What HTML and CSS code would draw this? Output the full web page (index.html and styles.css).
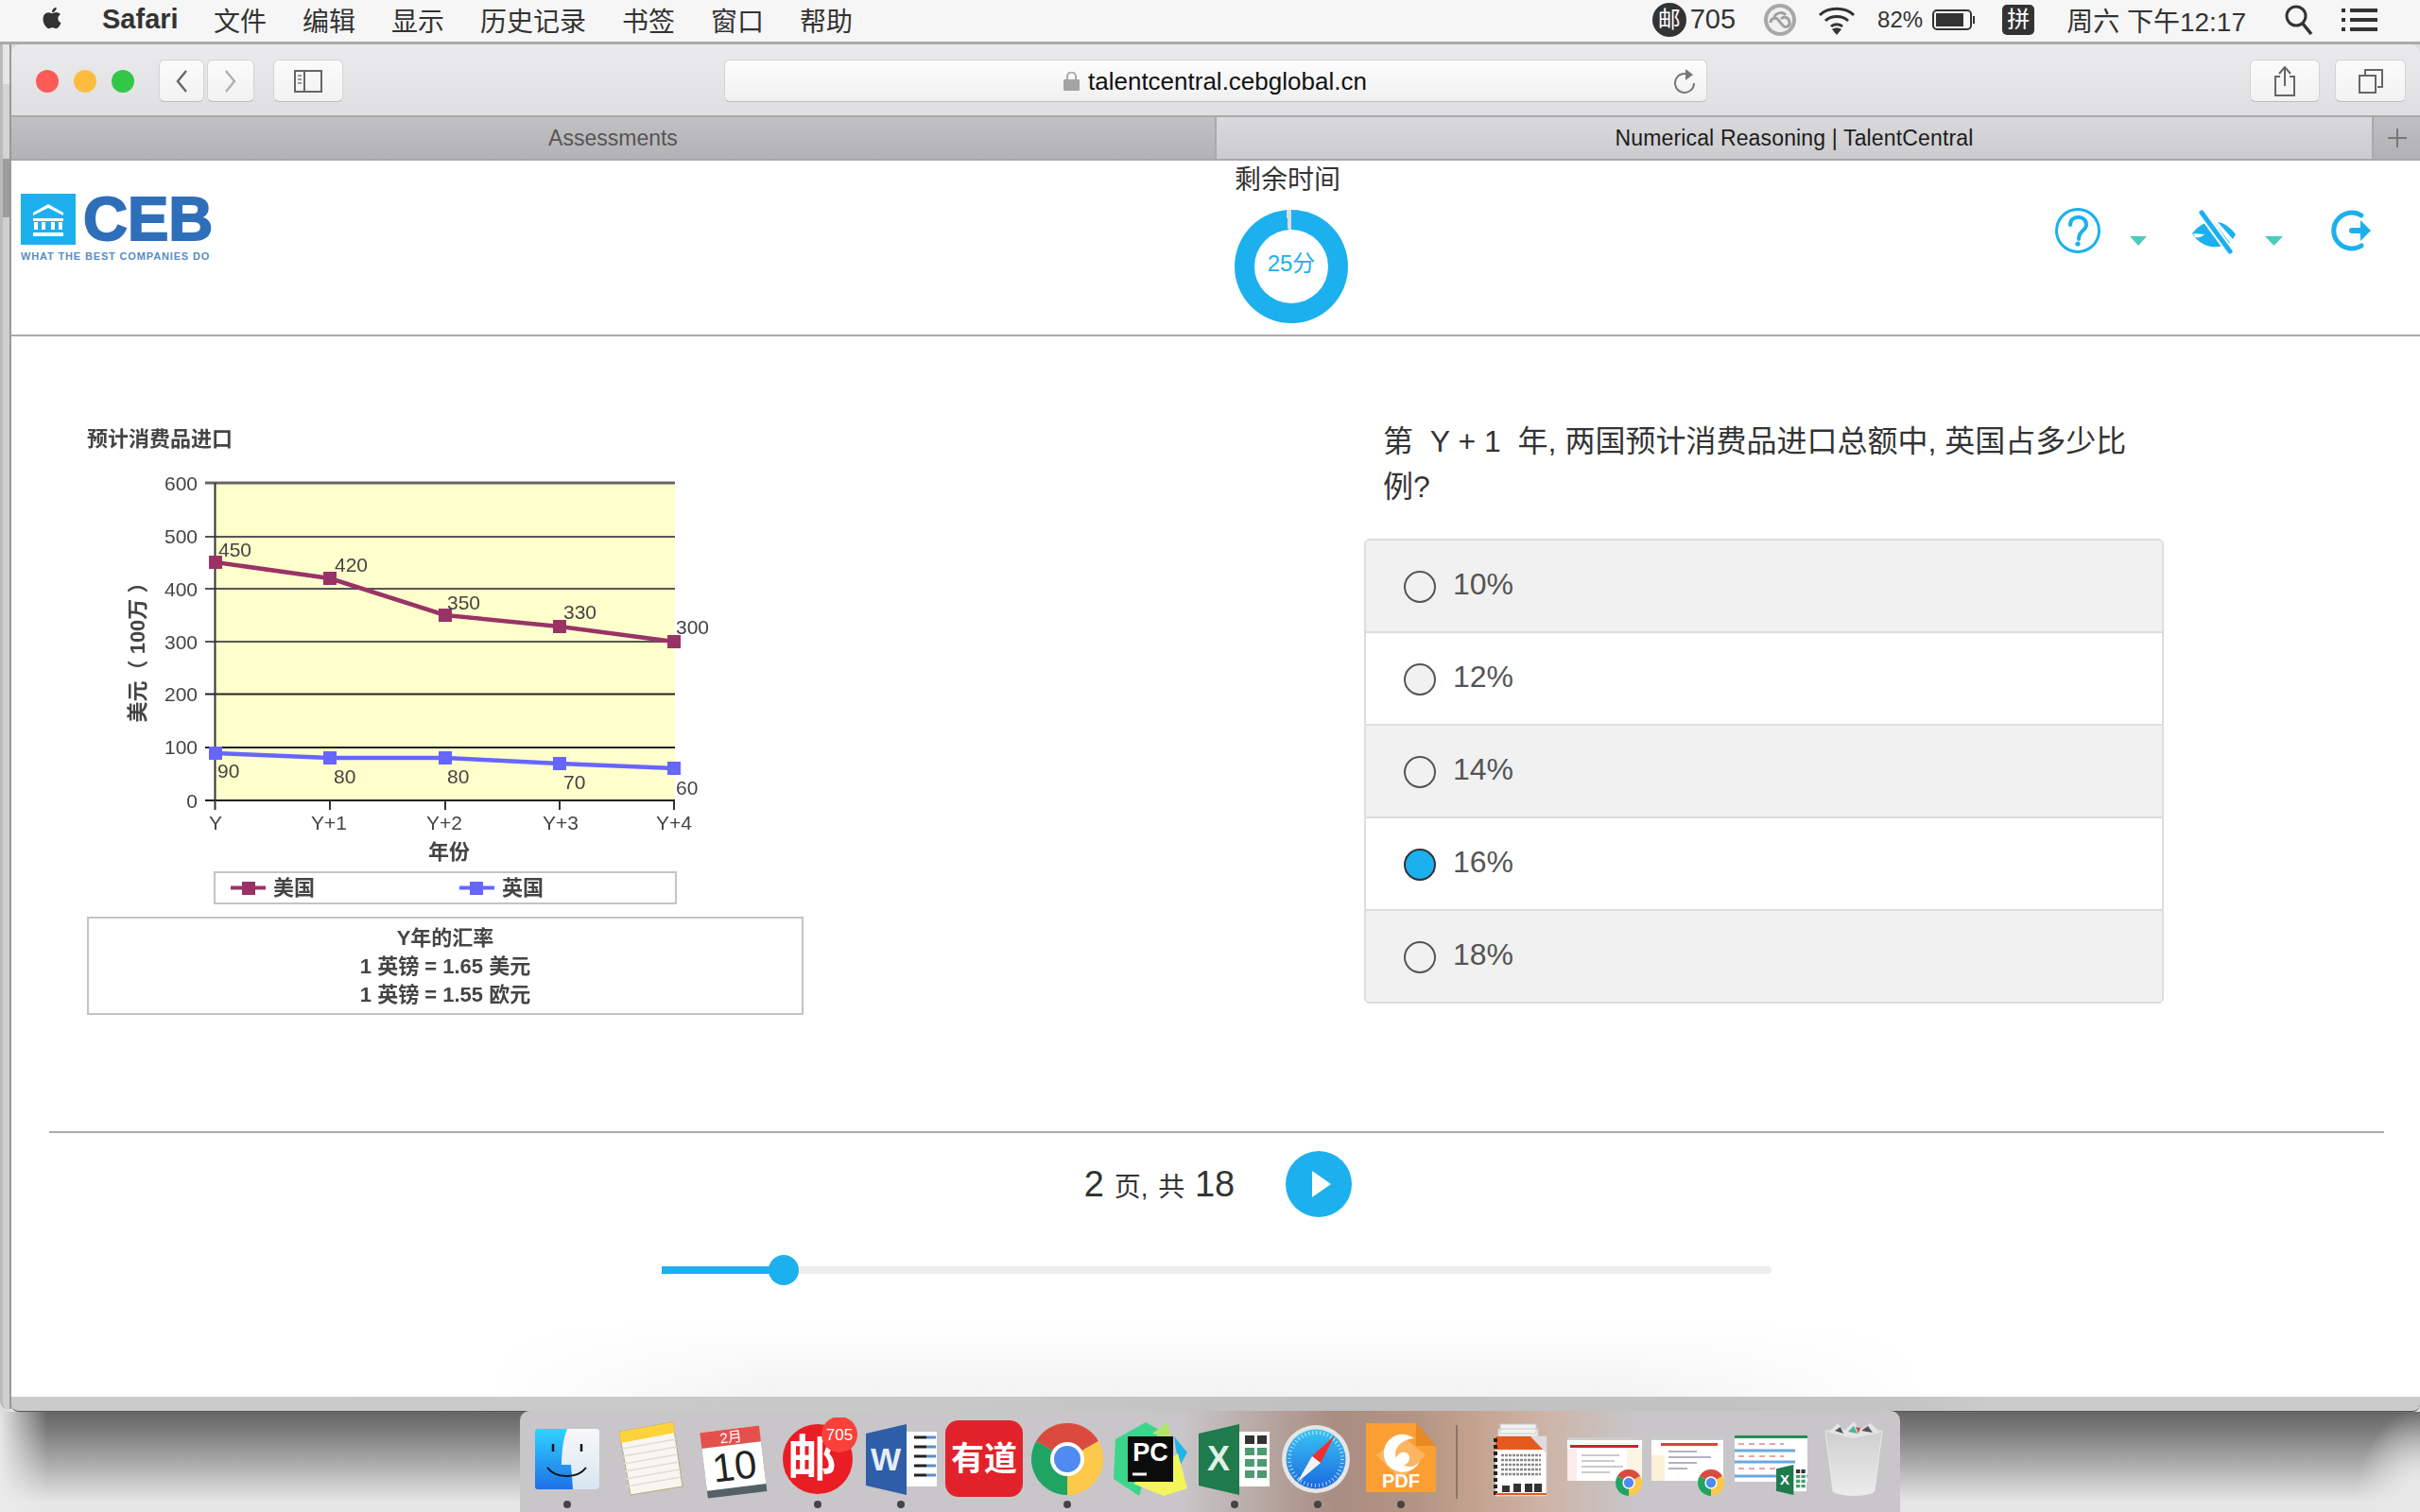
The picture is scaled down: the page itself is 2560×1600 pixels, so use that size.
FILE: index.html
```html
<!DOCTYPE html>
<html>
<head>
<title>Numerical Reasoning | TalentCentral</title>
<meta charset="utf-8">
<link rel="stylesheet" href="styles.css">
</head>
<body>

<svg class="defs" width="0" height="0">
 <symbol id="chrome" viewBox="0 0 76 76">
  <path d="M38 38L5.100 19A38 38 0 0 1 71 19Z" fill="#db4a3f"/>
  <path d="M38 38L71 19A38 38 0 0 1 38 76Z" fill="#fdc94b"/>
  <path d="M38 38L38 76A38 38 0 0 1 5.100 19Z" fill="#1fa463"/>
  <circle cx="38" cy="38" r="18" fill="#fff"/>
  <circle cx="38" cy="38" r="14" fill="#4f8bf0"/>
 </symbol>
 <symbol id="excel" viewBox="0 0 75 75">
  <rect x="42" y="8" width="33" height="58" fill="#fff"/>
  <path d="M49 12h10v9H49zM62 12h10v9H62z" fill="#333"/>
  <path d="M49 25h10v8H49zM62 25h10v8H62zM49 37h10v8H49zM62 37h10v8H62zM49 49h10v8H49zM62 49h10v8H62z" fill="#4d9a70"/>
  <path d="M0 10L43 0V75L0 65Z" fill="#1f7a4c"/>
 </symbol>
</svg>

<div class="menubar">
 <svg class="apple" viewBox="0 0 24 24"><path d="M17.05 20.28c-.98.95-2.05.8-3.08.35-1.09-.46-2.09-.48-3.24 0-1.44.62-2.2.44-3.06-.35C2.79 15.25 3.51 7.59 9.05 7.31c1.35.07 2.29.74 3.08.8 1.18-.24 2.31-.93 3.57-.84 1.51.12 2.65.72 3.4 1.8-3.12 1.87-2.38 5.98.48 7.13-.57 1.5-1.31 2.99-2.54 4.09zM12.03 7.25c-.15-2.23 1.66-4.07 3.74-4.25.29 2.58-2.34 4.5-3.74 4.25z"/></svg>
 <b class="appname">Safari</b>
 <span>文件</span><span>编辑</span><span>显示</span><span>历史记录</span><span>书签</span><span>窗口</span><span>帮助</span>
 <div class="status">
  <span class="mailbadge">邮</span>
  <span class="count">705</span>
  <svg class="st-cc" width="38" height="38" viewBox="0 0 38 38"><circle cx="19" cy="19" r="17" fill="#a8a8a8"/><circle cx="19" cy="19" r="13" fill="#f0f0f0"/><path d="M9 22c0-5 6-6 8-3l5 6c3 3 8 1 7-4s-6-6-9-3M13 16c2-5 9-6 12-2" fill="none" stroke="#a0a0a0" stroke-width="3"/></svg>
  <svg class="st-wifi" width="42" height="32" viewBox="0 0 42 32"><path d="M3 11C12 2 30 2 39 11M9 17C15 11 27 11 33 17M15 23C18 20 24 20 27 23" fill="none" stroke="#333" stroke-width="3"/><path d="M21 32l-5-6c3-2 7-2 10 0z" fill="#333"/></svg>
  <span class="pct">82%</span>
  <svg class="st-batt" width="46" height="22" viewBox="0 0 46 22"><rect x="1" y="1" width="40" height="20" rx="4" fill="none" stroke="#333" stroke-width="2"/><rect x="4" y="4" width="29" height="14" fill="#333"/><path d="M43 7h2v8h-2z" fill="#333"/></svg>
  <span class="pinyin">拼</span>
  <span class="clock">周六 下午12:17</span>
  <svg class="st-search" width="30" height="32" viewBox="0 0 30 32"><circle cx="12" cy="12" r="10" fill="none" stroke="#333" stroke-width="3"/><path d="M19 20l9 11" stroke="#333" stroke-width="3.500"/></svg>
  <svg class="st-list" width="38" height="24" viewBox="0 0 38 24"><path d="M9 2h29M9 12h29M9 22h29" stroke="#333" stroke-width="4"/><path d="M0 2h4M0 12h4M0 22h4" stroke="#333" stroke-width="4"/></svg>
 </div>
</div>

<div class="desk">
 <div class="backwin"></div>
 <div class="window">
  <div class="toolbar">
   <i class="light red"></i><i class="light yellow"></i><i class="light green"></i>
   <div class="btn btn-back"><svg width="14" height="26" viewBox="0 0 14 26"><path d="M12 2L3 13l9 11" fill="none" stroke="#666" stroke-width="2.400"/></svg></div>
   <div class="btn btn-fwd"><svg width="14" height="26" viewBox="0 0 14 26"><path d="M2 2l9 11-9 11" fill="none" stroke="#b0b0b0" stroke-width="2.400"/></svg></div>
   <div class="btn btn-side"><svg width="30" height="24" viewBox="0 0 30 24"><rect x="1" y="1" width="28" height="22" fill="none" stroke="#666" stroke-width="2"/><path d="M11 1v22" stroke="#666" stroke-width="2"/><path d="M4 6h4M4 10h4M4 14h4" stroke="#999" stroke-width="2"/></svg></div>
   <div class="urlbar">
    <svg class="lock" width="17" height="20" viewBox="0 0 17 20"><path d="M4 9V5a4.500 4.500 0 0 1 9 0v4" fill="none" stroke="#aaa" stroke-width="2"/><rect y="8" width="17" height="12" rx="1" fill="#a3a3a3"/></svg>
    <span class="url">talentcentral.cebglobal.cn</span>
    <svg class="reload" width="26" height="28" viewBox="0 0 26 28"><path d="M19 8A10 10 0 1 0 23 16" fill="none" stroke="#777" stroke-width="2"/><path d="M14 1l8 6-8 6z" fill="#777"/></svg>
   </div>
   <div class="btn btn-share"><svg width="24" height="32" viewBox="0 0 24 32"><path d="M7 11H2v20h20V11h-5" fill="none" stroke="#666" stroke-width="2"/><path d="M12 21V2M6 8l6-7 6 7" fill="none" stroke="#666" stroke-width="2"/></svg></div>
   <div class="btn btn-tabs"><svg width="26" height="26" viewBox="0 0 26 26"><rect x="1" y="7" width="17" height="18" fill="none" stroke="#666" stroke-width="2"/><path d="M7 6V1h18v18h-5" fill="none" stroke="#666" stroke-width="2"/></svg></div>
  </div>

  <div class="tabs">
   <div class="tab tab-off">Assessments</div>
   <div class="tab tab-on">Numerical Reasoning | TalentCentral</div>
   <div class="tab-add"><svg width="24" height="24" viewBox="0 0 24 24"><path d="M12 2v20M2 12h20" stroke="#777" stroke-width="2"/></svg></div>
  </div>

  <div class="page">
   <header class="head">
    <div class="logo">
     <div class="logo-row">
      <svg width="58" height="54" viewBox="0 0 58 54"><rect width="58" height="54" fill="#1cb0ee"/><path d="M13 20L29 11l16 9v3L29 15 13 23z" fill="#fff"/><path d="M13 26h32v3H13zM13 41h32v4H13zM14 30h4v8h-4zM22 30h4v8h-4zM32 30h4v8h-4zM40 30h4v8h-4z" fill="#fff"/></svg>
      <span class="logo-name">CEB</span>
     </div>
     <div class="logo-tag">WHAT THE BEST COMPANIES DO</div>
    </div>
    <div class="timer">
     <div class="timer-label">剩余时间</div>
     <div class="donut"><span>25分</span></div>
    </div>
    <div class="head-icons">
     <svg width="352" height="60" viewBox="2170 220 352 60">
      <circle cx="2198" cy="244" r="22.500" fill="none" stroke="#1cb0ee" stroke-width="3"/>
      <path d="M2190 238c0-11 17-11 17 0 0 6-8 6-8 15" fill="none" stroke="#1cb0ee" stroke-width="4" stroke-linecap="round"/>
      <circle cx="2198" cy="258" r="2.600" fill="#1cb0ee"/>
      <path d="M2253 250h18l-9 10z" fill="#4fc9bb"/>
      <path d="M2319 247c8-10 17-13 23-12l17 22c-9 5-18 5-24 3-6-2-12-6-16-13z" fill="#1cb0ee"/>
      <path d="M2346 235c7 1 13 5 19 13l-3 5z" fill="#1cb0ee"/>
      <path d="M2320 247l12 1c-3 3-7 4-10 3z" fill="#fff"/>
      <path d="M2329 225l30 41" stroke="#fff" stroke-width="9"/>
      <path d="M2329 225l30 41" stroke="#1cb0ee" stroke-width="5" stroke-linecap="round"/>
      <path d="M2396 250h19l-9.500 10z" fill="#4fc9bb"/>
      <path d="M2498 228a19 19 0 1 0 0 32" fill="none" stroke="#1cb0ee" stroke-width="5" stroke-linecap="round"/>
      <path d="M2488 244h10" stroke="#1cb0ee" stroke-width="6" stroke-linecap="round"/>
      <path d="M2497 233l11 11-11 11z" fill="#1cb0ee"/>
     </svg>
    </div>
   </header>

   <main class="main">
    <div class="chart-col">
     <svg class="chart" width="770" height="630" viewBox="90 450 770 630">
      <text x="92" y="472" class="t-bold">预计消费品进口</text>
      <rect x="228" y="511" width="486" height="336" fill="#ffffcc"/>
      <path d="M217 511H714" stroke="#666" stroke-width="3"/>
      <path d="M217 568H714M217 623H714M217 679H714" stroke="#555" stroke-width="2"/>
      <path d="M217 734.500H714M217 791H714M217 847H714" stroke="#222" stroke-width="2"/>
      <path d="M227.500 511V857M349 847v10M471 847v10M592 847v10M713 847v10" stroke="#333" stroke-width="2"/>
      <g class="t-tick" text-anchor="end">
       <text x="209" y="519">600</text><text x="209" y="575">500</text><text x="209" y="631">400</text>
       <text x="209" y="687">300</text><text x="209" y="742">200</text><text x="209" y="798">100</text><text x="209" y="855">0</text>
      </g>
      <text transform="translate(153 685) rotate(-90)" text-anchor="middle" class="t-bold">美元（ 100万 ）</text>
      <polyline points="228,595 349,612 471,651 592,663 713,679" fill="none" stroke="#993366" stroke-width="4.500"/>
      <path d="M221 588h14v14h-14zM342 605h14v14h-14zM464 644h14v14h-14zM585 656h14v14h-14zM706 672h14v14h-14z" fill="#993366"/>
      <polyline points="228,797 349,802 471,802 592,808 713,813" fill="none" stroke="#6666ff" stroke-width="4.500"/>
      <path d="M221 790h14v14h-14zM342 795h14v14h-14zM464 795h14v14h-14zM585 801h14v14h-14zM706 806h14v14h-14z" fill="#6666ff"/>
      <g class="t-tick">
       <text x="231" y="589">450</text><text x="354" y="605">420</text><text x="473" y="645">350</text><text x="596" y="655">330</text><text x="715" y="671">300</text>
       <text x="230" y="823">90</text><text x="353" y="829">80</text><text x="473" y="829">80</text><text x="596" y="835">70</text><text x="715" y="841">60</text>
      </g>
      <g class="t-tick" text-anchor="middle">
       <text x="228" y="878">Y</text><text x="348" y="878">Y+1</text><text x="470" y="878">Y+2</text><text x="593" y="878">Y+3</text><text x="713" y="878">Y+4</text>
      </g>
      <text x="475" y="909" text-anchor="middle" class="t-bold">年份</text>
      <rect x="227" y="923" width="488" height="33" fill="#fff" stroke="#c4c4c4" stroke-width="2"/>
      <path d="M244 939.500h37" stroke="#993366" stroke-width="4"/><rect x="256" y="933" width="14" height="14" fill="#993366"/>
      <text x="289" y="947" class="t-bold">美国</text>
      <path d="M486 939.500h37" stroke="#6666ff" stroke-width="4"/><rect x="497" y="933" width="14" height="14" fill="#6666ff"/>
      <text x="531" y="947" class="t-bold">英国</text>
      <rect x="93" y="971" width="756" height="102" fill="#fff" stroke="#c4c4c4" stroke-width="2"/>
      <g class="t-bold" text-anchor="middle">
       <text x="471" y="1000">Y年的汇率</text>
       <text x="471" y="1030">1 英镑 = 1.65 美元</text>
       <text x="471" y="1060">1 英镑 = 1.55 欧元</text>
      </g>
     </svg>
    </div>
    <div class="quiz">
     <p class="question">第&nbsp; Y + 1 &nbsp;年, 两国预计消费品进口总额中, 英国占多少比例?</p>
     <div class="options">
      <label class="opt"><i class="radio"></i>10%</label>
      <label class="opt"><i class="radio"></i>12%</label>
      <label class="opt"><i class="radio"></i>14%</label>
      <label class="opt"><i class="radio on"></i>16%</label>
      <label class="opt"><i class="radio"></i>18%</label>
     </div>
    </div>
   </main>

   <footer class="foot">
    <div class="pager">
     <div class="pager-text"><span class="big">2</span> 页, 共 <span class="big">18</span></div>
     <div class="next"><svg width="20" height="28" viewBox="0 0 20 28"><path d="M0 0l20 14L0 28z" fill="#fff"/></svg></div>
    </div>
    <div class="slider"><div class="slider-fill"></div><div class="slider-knob"></div></div>
   </footer>
   <div class="glow"></div>
  </div>
  <div class="winbottom"></div>
 </div>
</div>

<div class="wallpaper">
 <div class="dock">
  <div class="slot"><svg viewBox="0 0 88 88">
   <defs><linearGradient id="fa" x1="0" y1="0" x2="0" y2="1"><stop offset="0" stop-color="#2fd3ff"/><stop offset="1" stop-color="#1f6fe8"/></linearGradient><linearGradient id="fb" x1="0" y1="0" x2="0" y2="1"><stop offset="0" stop-color="#f8f8f8"/><stop offset="1" stop-color="#d8e6f2"/></linearGradient></defs>
   <rect x="10" y="12" width="68" height="64" rx="3" fill="url(#fa)"/>
   <path d="M44 12H75a3 3 0 0 1 3 3V73a3 3 0 0 1-3 3H50L48 50H38C38 36 40 22 44 12Z" fill="url(#fb)"/>
   <path d="M29 28v8M59 28v8" stroke="#111" stroke-width="2.500"/>
   <path d="M23 53c9 12 32 12 41 0" fill="none" stroke="#111" stroke-width="2"/>
  </svg><i class="dot"></i></div>

  <div class="slot"><svg viewBox="0 0 88 88">
   <path d="M11 15L68 5L78 73L23 82Z" fill="#f8f6ef" stroke="#b7a67a"/>
   <path d="M11 15L68 5L70 16L13 27Z" fill="#fdd23a"/>
   <path d="M14 33L71 23M15 41L72 31M16 49L73 39M17 57L74 47M18 65L75 55M19 73L76 63" stroke="#ddd" stroke-width="1.500"/>
  </svg><i class="dot-none"></i></div>

  <div class="slot"><svg viewBox="0 0 88 88">
   <g transform="rotate(-7 44 44)">
    <rect x="12" y="14" width="63" height="68" fill="#556067"/>
    <rect x="12" y="12" width="63" height="62" fill="#fff"/>
    <rect x="12" y="12" width="63" height="17" fill="#e4504c"/>
    <text x="44" y="26" class="ic-month">2月</text>
    <text x="44" y="66" class="ic-day">10</text>
   </g>
  </svg><i class="dot-none"></i></div>

  <div class="slot"><svg viewBox="0 0 88 88">
   <circle cx="44" cy="44" r="37" fill="#ea1c24"/>
   <text x="38" y="62" class="ic-mail">邮</text>
   <circle cx="67" cy="18" r="19" fill="#f9403a"/>
   <text x="67" y="24" class="ic-badge">705</text>
  </svg><i class="dot"></i></div>

  <div class="slot"><svg viewBox="0 0 88 88">
   <rect x="50" y="15" width="32" height="58" fill="#fff"/>
   <path d="M58 21h13M58 31h13M58 41h13M58 51h13M58 61h13" stroke="#222" stroke-width="3"/>
   <path d="M71 21h10M71 31h10M71 41h10M71 51h10M71 61h10" stroke="#5b8ec9" stroke-width="3"/>
   <path d="M7 17L50 7V82L7 72Z" fill="#2f5ea8"/>
   <text x="28" y="56" class="ic-w">W</text>
  </svg><i class="dot"></i></div>

  <div class="slot"><svg viewBox="0 0 88 88">
   <rect x="3" y="3" width="82" height="81" rx="14" fill="#e2222b"/>
   <text x="44" y="56" class="ic-yd">有道</text>
  </svg><i class="dot-none"></i></div>

  <div class="slot"><svg viewBox="0 0 88 88"><use href="#chrome" x="6" y="6" width="76" height="76"/></svg><i class="dot"></i></div>

  <div class="slot"><svg viewBox="0 0 88 88">
   <path d="M7 23L39 5L53 13L32 83L5 65Z" fill="#3bd68c"/>
   <path d="M62 5L66 23L46 17Z" fill="#b5e36a"/>
   <path d="M69 20L83 37L74 53Z" fill="#21b6e8"/>
   <path d="M26 70L73 38L83 75L58 83Z" fill="#f3f65a"/>
   <rect x="20" y="20" width="48" height="48" fill="#0c0c0c"/>
   <text x="44" y="46" class="ic-pc">PC</text>
   <path d="M25 60h15" stroke="#fff" stroke-width="3"/>
  </svg><i class="dot-none"></i></div>

  <div class="slot"><svg viewBox="0 0 88 88">
   <use href="#excel" x="6" y="7" width="75" height="75"/>
   <text x="27" y="56" class="ic-x">X</text>
  </svg><i class="dot"></i></div>

  <div class="slot"><svg viewBox="0 0 88 88">
   <defs><linearGradient id="sf" x1="0" y1="0" x2="0" y2="1"><stop offset="0" stop-color="#39c4f4"/><stop offset="1" stop-color="#1a68de"/></linearGradient></defs>
   <circle cx="42" cy="44" r="36" fill="#e6e6e6"/>
   <circle cx="42" cy="44" r="31.500" fill="url(#sf)"/>
   <circle cx="42" cy="44" r="28" fill="none" stroke="#fff" stroke-width="4" stroke-dasharray="1 3" opacity=".7"/>
   <path d="M62 19L38 41L47 48Z" fill="#f0302c"/>
   <path d="M22 69L38 41L47 48Z" fill="#f4f4f4"/>
  </svg><i class="dot"></i></div>

  <div class="slot"><svg viewBox="0 0 88 88">
   <path d="M7 6H59L81 32V79H7Z" fill="#fb9f35"/>
   <path d="M60 6L81 30H60Z" fill="#e88a22"/>
   <path d="M44 18L70 40L44 66L18 40Z" fill="#fdb563"/>
   <path d="M58 22a20 20 0 1 0 6 24c-4 6-12 8-17 4 6-1 8-8 4-12-4-3-11 0-12 5-4-10 6-20 19-21z" fill="#fff"/>
   <text x="44" y="74" class="ic-pdf">PDF</text>
  </svg><i class="dot"></i></div>

  <div class="sep"></div>

  <div class="slot"><svg viewBox="0 0 88 88">
   <path d="M22 7H60V17H22zM20 12H62V22H20z" fill="#f2f2f2" stroke="#ccc"/>
   <rect x="17" y="20" width="54" height="63" fill="#fff" stroke="#ccc"/>
   <rect x="17" y="20" width="54" height="14" fill="#e55a1f"/>
   <path d="M17 22v60" stroke="#222" stroke-width="4" stroke-dasharray="4 3"/>
   <path d="M23 40h42M23 45h42M23 50h42M23 55h42M23 60h42" stroke="#888" stroke-width="2.500" stroke-dasharray="3 1"/>
   <path d="M24 72h8v7h-8zM36 70h8v9h-8zM48 70h8v9h-8zM58 70h8v9h-8z" fill="#333"/>
   <path d="M17 81h54" stroke="#e55a1f" stroke-width="2"/>
   <path d="M54 20H71V38Z" fill="#ddd"/>
  </svg><i class="dot-none"></i></div>

  <div class="slot"><svg viewBox="0 0 88 88">
   <rect x="5" y="21" width="79" height="46" fill="#fff"/>
   <rect x="5" y="21" width="79" height="3" fill="#ccc"/>
   <rect x="8" y="29" width="72" height="3" fill="#c8242c"/>
   <rect x="5" y="33" width="10" height="34" fill="#fdeaea"/>
   <rect x="68" y="33" width="16" height="34" fill="#fcf5e6"/>
   <path d="M20 40h40M20 46h35M20 52h44M20 58h30" stroke="#bbb" stroke-width="1.500"/>
   <use href="#chrome" x="56" y="55" width="28" height="28"/>
  </svg><i class="dot-none"></i></div>

  <div class="slot"><svg viewBox="0 0 88 88">
   <rect x="6" y="21" width="76" height="46" fill="#fff"/>
   <rect x="6" y="21" width="76" height="3" fill="#ccc"/>
   <rect x="16" y="27" width="60" height="3" fill="#d8453c"/>
   <rect x="6" y="40" width="14" height="27" fill="#fcf0d8"/>
   <path d="M24 36h30M24 42h45M24 48h30M24 54h20" stroke="#99a" stroke-width="1.500"/>
   <use href="#chrome" x="55" y="55" width="28" height="28"/>
  </svg><i class="dot-none"></i></div>

  <div class="slot"><svg viewBox="0 0 88 88">
   <rect x="6" y="19" width="77" height="49" fill="#fff"/>
   <rect x="6" y="19" width="77" height="3" fill="#2a8a57"/>
   <path d="M6 35h64M6 47h64M6 62h77" stroke="#6ba8e0" stroke-width="3"/>
   <path d="M10 28h48M10 41h48M10 54h48" stroke="#e9a3a3" stroke-width="2" stroke-dasharray="6 5"/>
   <use href="#excel" x="50" y="50" width="32" height="32"/>
   <text x="59" y="71" class="ic-x-s">X</text>
  </svg><i class="dot-none"></i></div>

  <div class="slot"><svg viewBox="0 0 88 88">
   <defs><linearGradient id="tr" x1="0" y1="0" x2="0" y2="1"><stop offset="0" stop-color="#cfcfd1"/><stop offset="1" stop-color="#ececec"/></linearGradient></defs>
   <path d="M14 14L74 14L66 78C60 84 28 84 22 78Z" fill="url(#tr)" stroke="#e8e8e8"/>
   <path d="M17 16L27 6L34 14L44 4L50 13L62 6L72 16L44 22Z" fill="#e4e4e4"/>
   <path d="M24 14l6-4 3 7zM52 14l7-5 5 7z" fill="#555"/>
   <path d="M38 15l6-6 4 8z" fill="#4bb3a6"/>
   <path d="M46 10l5 1-2 6z" fill="#c0524a"/>
  </svg><i class="dot-none"></i></div>
 </div>
</div>

</body>
</html>
```

FILE: styles.css
```css
* {box-sizing:border-box;}
html, body {margin:0; padding:0;}
body {
 width:2560px;
 height:1600px;
 overflow:hidden;
 display:flex;
 flex-direction:column;
 font-family:"Liberation Sans", "Noto Sans CJK SC", sans-serif;
 color:#333;
 background:#ddd;
}
i {display:block;}
svg {display:block;}
.defs {position:absolute;}

/* menu bar */
.menubar {
 height:47px;
 flex:none;
 display:flex;
 align-items:center;
 gap:38px;
 padding:0 45px 3px 40px;
 background:#f6f6f6;
 border-bottom:3px solid #aaa;
 font-size:28px;
 color:#333;
}
.apple {width:30px; height:34px; fill:#333; margin-top:-4px;}
.appname {width:80px; font-size:29px;}
.status {margin-left:auto; display:flex; align-items:center;}
.mailbadge {
 width:36px;
 height:36px;
 border-radius:50%;
 background:#333;
 color:#fff;
 font-size:24px;
 line-height:36px;
 text-align:center;
}
.count {font-size:29px; margin-left:4px;}
.st-cc {margin-left:28px;}
.st-wifi {margin-left:20px;}
.pct {font-size:24px; margin-left:22px;}
.st-batt {margin-left:10px;}
.pinyin {
 width:34px;
 height:32px;
 margin-left:28px;
 background:#333;
 color:#fff;
 border-radius:5px;
 font-size:24px;
 line-height:32px;
 text-align:center;
}
.clock {margin-left:34px; font-size:28px;}
.st-search {margin-left:41px;}
.st-list {margin-left:30px;}

/* browser window */
.desk {flex:1; display:flex; min-height:0;}
.backwin {
 width:12px;
 flex:none;
 border-left:3px solid #bbb;
 border-right:2px solid #999;
 background:linear-gradient(#e6e6e6 0, #e6e6e6 42px, #d4d4d4 42px, #d4d4d4 121px, #9d9d9d 121px, #9d9d9d 183px, #cfcfcf 183px);
 border-bottom-left-radius:8px;
 margin-bottom:3px;
}
.window {
 flex:1;
 display:flex;
 flex-direction:column;
 min-width:0;
 border-top-left-radius:10px;
 border-top-right-radius:10px;
 overflow:hidden;
}
.toolbar {
 height:77px;
 flex:none;
 display:flex;
 align-items:flex-start;
 padding:16px 0 0 26px;
 background:linear-gradient(#ebebed, #dfdfe1);
 border-bottom:2px solid #a9a9a9;
}
.light {width:24px; height:24px; border-radius:50%; margin:11px 16px 0 0;}
.red {background:#fc5b57;}
.yellow {background:#fdbc40;}
.green {background:#33c748;}
.btn {
 height:45px;
 display:flex;
 align-items:center;
 justify-content:center;
 background:linear-gradient(#fbfbfb, #f2f2f2);
 border:1px solid #d4d4d4;
 border-bottom-color:#bbb;
 border-radius:6px;
}
.btn-back {width:48px; margin-left:10px;}
.btn-fwd {width:50px; margin-left:3px;}
.btn-side {width:74px; margin-left:20px;}
.urlbar {
 width:1040px;
 height:45px;
 margin-left:403px;
 display:flex;
 align-items:center;
 padding-left:358px;
 background:linear-gradient(#fdfdfd, #f0f0f0);
 border:1px solid #d4d4d4;
 border-bottom-color:#bbb;
 border-radius:6px;
 font-size:26px;
 color:#111;
 position:relative;
}
.url {padding-top:2px;}
.lock {margin-right:9px;}
.reload {position:absolute; right:10px; top:8px;}
.btn-share {width:74px; margin-left:574px;}
.btn-tabs {width:75px; margin-left:16px;}

.tabs {height:46px; flex:none; display:flex; border-bottom:2px solid #a9a9a9; font-size:23px;}
.tab {display:flex; align-items:center; justify-content:center;}
.tab-off {
 width:1273px;
 color:#555;
 background:linear-gradient(#c1c0c2, #b3b2b4);
}
.tab-on {
 width:1226px;
 color:#1c1c1c;
 letter-spacing:.15px;
 background:linear-gradient(#d9d8da, #cccbcd);
 border-left:2px solid #aaa;
 border-right:2px solid #aaa;
}
.tab-add {
 flex:1;
 display:flex;
 align-items:center;
 justify-content:center;
 background:linear-gradient(#bfbec0, #b2b1b3);
}

/* page */
.page {flex:1; display:flex; flex-direction:column; min-height:0; background:#fff;}
.head {
 height:186px;
 flex:none;
 display:flex;
 border-bottom:2px solid #aaa;
}
.logo {width:1294px; padding:35px 0 0 10px;}
.logo-row {display:flex; align-items:center; gap:8px;}
.logo-name {font-size:65px; font-weight:bold; line-height:54px; color:#2f6fb9; -webkit-text-stroke:2px #2f6fb9;}
.logo-tag {
 width:202px;
 margin-top:6px;
 font-size:11px;
 font-weight:bold;
 letter-spacing:.85px;
 color:#5b8cc6;
 white-space:nowrap;
}
.timer {width:120px;}
.timer-label {font-size:28px; line-height:42px; white-space:nowrap;}
.donut {
 width:120px;
 height:120px;
 margin-top:10px;
 border-radius:50%;
 background:conic-gradient(#1cb0ee 0 355deg, #ddd 355deg 360deg);
 display:flex;
 align-items:center;
 justify-content:center;
}
.donut span {
 width:78px;
 height:78px;
 border-radius:50%;
 background:#fff;
 color:#1cb0ee;
 font-size:24px;
 line-height:72px;
 text-align:center;
}
.head-icons {margin-left:744px; padding-top:50px;}

.main {display:flex; height:841px; flex:none;}
.chart-col {width:1431px; padding:94px 0 0 78px;}
.chart {filter:blur(.6px);}
.chart text {font-family:"Liberation Sans", "Noto Sans CJK SC", sans-serif;}
.t-bold {font-size:22px; font-weight:bold; fill:#444;}
.t-tick {font-size:21px; fill:#444;}

.quiz {width:846px;}
.question {
 margin:87px 0 31px;
 padding:0 20px;
 font-size:32px;
 line-height:48px;
 color:#333;
}
.options {border:2px solid #ddd; border-radius:6px; overflow:hidden;}
.opt {
 height:98px;
 display:flex;
 align-items:center;
 gap:18px;
 padding:0 0 3px 40px;
 font-size:32px;
 color:#555;
 border-bottom:2px solid #ddd;
}
.opt:last-child {border-bottom:none; height:96px;}
.opt:nth-child(odd) {background:#f1f1f1;}
.radio {width:34px; height:34px; border-radius:50%; border:2px solid #555; margin-top:5px;}
.opt:nth-child(2) .radio {background:#f1f1f1;}
.radio.on {background:#1cb0ee; border-color:#333;}

.foot {
 margin:0 38px 0 40px;
 border-top:2px solid #aaa;
 flex:none;
 height:202px;
 display:flex;
 flex-direction:column;
 align-items:center;
}
.pager {display:flex; align-items:center; gap:54px; margin:19px 0 0 3px;}
.pager-text {font-size:28px; word-spacing:3px; color:#333; white-space:nowrap;}
.big {font-size:38px;}
.next {
 width:70px;
 height:70px;
 border-radius:50%;
 background:#1cb0ee;
 display:flex;
 align-items:center;
 justify-content:center;
 padding-left:6px;
}
.slider {
 width:1174px;
 height:8px;
 margin-top:52px;
 background:#eee;
 border-radius:4px;
 position:relative;
}
.slider-fill {width:120px; height:8px; background:#1cb0ee;}
.slider-knob {
 position:absolute;
 left:113px;
 top:-12px;
 width:32px;
 height:32px;
 border-radius:50%;
 background:#1cb0ee;
}
.glow {
 flex:1;
 background:linear-gradient(#fff, #f3f3f3);
 -webkit-mask-image:linear-gradient(90deg, transparent 500px, #000 800px, #000 1700px, transparent 2030px);
 mask-image:linear-gradient(90deg, transparent 500px, #000 800px, #000 1700px, transparent 2030px);
}
.winbottom {
 height:16px;
 flex:none;
 background:linear-gradient(90deg, #cbcbcb 0, #c8c8c8 1000px, #c0c0c0 1400px, #c4c4c4 2000px, #cbcbcb 2100px);
 border-bottom:1px solid #555;
 border-bottom-left-radius:8px;
 border-bottom-right-radius:8px;
}

/* desktop and dock */
.wallpaper {
 height:106px;
 flex:none;
 display:flex;
 justify-content:center;
 background:
  radial-gradient(ellipse 70px 110px at 100% 100%, rgba(232,232,232,1) 30%, rgba(232,232,232,0)),
  linear-gradient(90deg, rgba(236,236,236,.95), rgba(236,236,236,0) 50px),
  linear-gradient(#666, #7d7d7d 20%, #a9a9a9 50%, #e6e6e6 90%);
}
.dock {
 width:1460px;
 height:107px;
 margin-top:-1px;
 padding:7px 6px 0;
 display:flex;
 border-top-left-radius:10px;
 border-top-right-radius:10px;
 background:linear-gradient(90deg, #c8c6c9 0, #c8c6c9 700px, #a98d82 860px, #b49584 950px, #c4a28f 1010px, #cdb3a6 1080px, #c8c6c9 1180px);
}
.slot {width:88.200px; flex:none; display:flex; flex-direction:column; align-items:center;}
.slot svg {width:88px; height:88px; flex:none;}
.slot text {font-family:"Liberation Sans", "Noto Sans CJK SC", sans-serif;}
.dot {width:8px; height:8px; border-radius:50%; background:#444;}
.sep {width:38.400px; flex:none;}
.sep:after {content:""; display:block; width:2px; height:78px; margin:8px 0 0 14px; background:#8c7468;}
.ic-month {font-size:15px; fill:#fff; text-anchor:middle;}
.ic-day {font-size:42px; fill:#222; text-anchor:middle;}
.ic-mail {font-size:52px; font-weight:bold; fill:#fff; text-anchor:middle;}
.ic-badge {font-size:17px; fill:#fff; text-anchor:middle;}
.ic-w {font-size:34px; font-weight:bold; fill:#e4eefb; text-anchor:middle;}
.ic-x {font-size:36px; font-weight:bold; fill:#dff0e6; text-anchor:middle;}
.ic-x-s {font-size:15px; font-weight:bold; fill:#fff; text-anchor:middle;}
.ic-yd {font-size:35px; font-weight:bold; fill:#fff; text-anchor:middle;}
.ic-pc {font-size:27px; font-weight:bold; fill:#fff; text-anchor:middle;}
.ic-pdf {font-size:20px; font-weight:bold; fill:#fff; text-anchor:middle;}
```
